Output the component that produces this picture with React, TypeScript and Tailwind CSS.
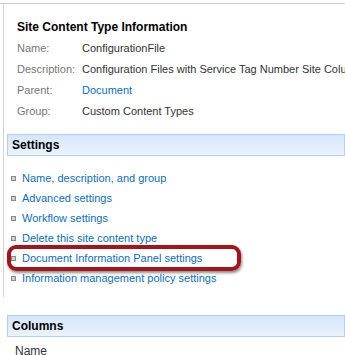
const info = [
  { label: "Name:", value: "ConfigurationFile" },
  { label: "Description:", value: "Configuration Files with Service Tag Number Site Columns" },
  { label: "Parent:", value: "Document", link: true },
  { label: "Group:", value: "Custom Content Types" },
];

const settings = [
  "Name, description, and group",
  "Advanced settings",
  "Workflow settings",
  "Delete this site content type",
  "Document Information Panel settings",
  "Information management policy settings",
];

function SectionHeader({ title }: { title: string }) {
  return (
    <div className="flex h-[22px] items-center border border-[#b3d0f0] bg-gradient-to-b from-[#d5e6fb] to-[#ebf3fd] pl-[4px] text-[12px] font-bold text-black">
      {title}
    </div>
  );
}

export default function App() {
  return (
    <div
      className="relative h-[355px] w-[345px] overflow-hidden bg-white text-[11px] text-[#3b3b3b]"
      style={{ fontFamily: '"Liberation Sans", Arial, sans-serif' }}
    >
      <div className="mt-[3px] border-t border-[#cfcfcf]">
        <div className="ml-[3px] border-l border-[#d6d6d6] pb-[9px] pt-[12px]">
          <div className="pl-[13px]">
            <div className="flex h-[22px] items-center whitespace-nowrap text-[12px] font-bold text-black">
              Site Content Type Information
            </div>
            {info.map((row) => (
              <div key={row.label} className="flex h-[21px] items-center whitespace-nowrap">
                <span className="w-[65px] shrink-0 text-[#777777]">{row.label}</span>
                <span className={row.link ? "text-[#0a6fc2]" : "text-[#333333]"}>{row.value}</span>
              </div>
            ))}
          </div>

          <div className="ml-[3px] mt-[12px]">
            <SectionHeader title="Settings" />
          </div>

          <ul className="mt-[12px] pl-[7px]">
            {settings.map((s) => (
              <li key={s} className="flex h-[20px] items-center whitespace-nowrap">
                <span className="mr-[6px] h-[5px] w-[5px] shrink-0 border border-[#8a8a8a] bg-[#cfcfcf]" />
                <span className="text-[#0a6fc2]">{s}</span>
              </li>
            ))}
          </ul>
        </div>
      </div>

      <div className="ml-[7px] mt-[18px]">
        <SectionHeader title="Columns" />
      </div>
      <div className="mt-[4px] flex h-[20px] items-center pl-[15px] text-[12px] text-[#333333]">
        Name
      </div>

      <div className="pointer-events-none absolute left-[7px] top-[245px] h-[26px] w-[234px] rounded-[9px] border-[4px] border-[#a3141b] shadow-[1px_2px_3px_rgba(0,0,0,0.45)]" />
    </div>
  );
}
